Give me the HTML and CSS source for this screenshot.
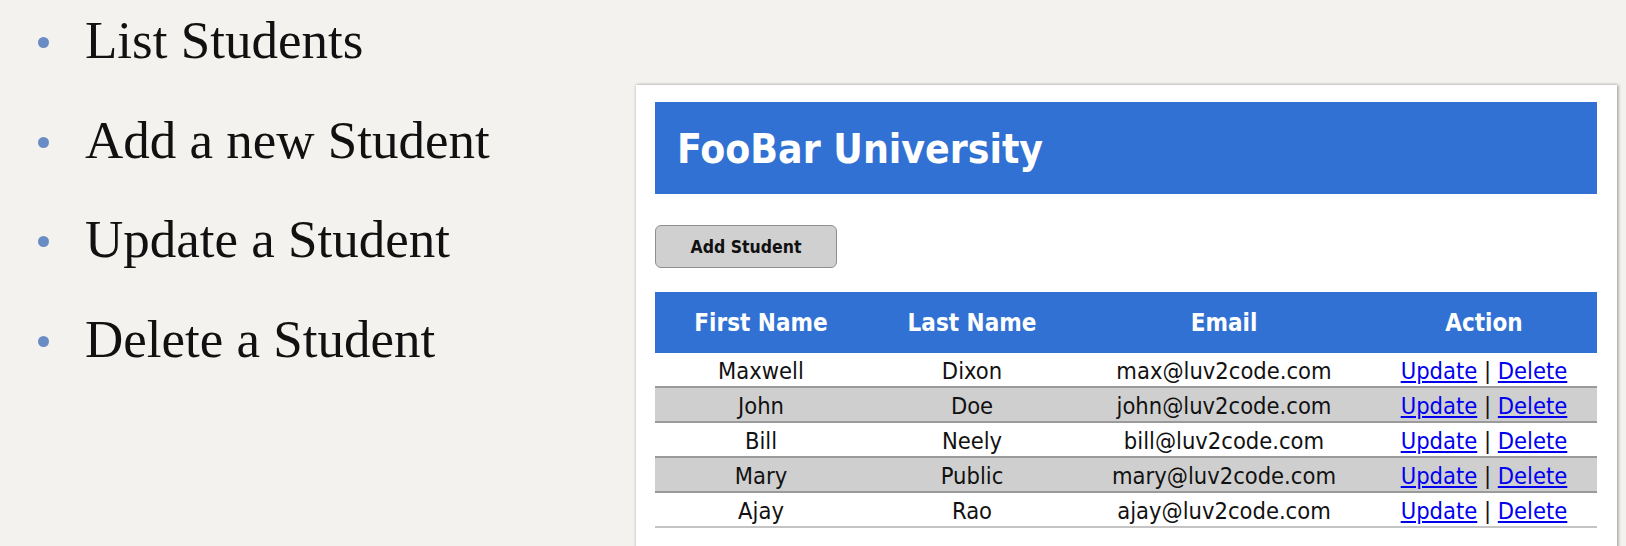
FILE: index.html
```html
<!DOCTYPE html>
<html lang="en">
<head>
<meta charset="utf-8">
<title>Student Tracker</title>
<link rel="stylesheet" href="styles.css">
</head>
<body>
<div class="slide">
  <ul class="points">
    <li>List Students</li>
    <li>Add a new Student</li>
    <li>Update a Student</li>
    <li>Delete a Student</li>
  </ul>
  <div class="panel">
    <div class="banner"><h1>FooBar University</h1></div>
    <button class="add-btn" type="button">Add Student</button>
    <table class="students">
      <colgroup>
        <col class="c-first"><col class="c-last"><col class="c-email"><col class="c-action">
      </colgroup>
      <thead>
        <tr><th>First Name</th><th>Last Name</th><th>Email</th><th>Action</th></tr>
      </thead>
      <tbody>
        <tr><td>Maxwell</td><td>Dixon</td><td>max@luv2code.com</td><td><a href="#">Update</a> | <a href="#">Delete</a></td></tr>
        <tr><td>John</td><td>Doe</td><td>john@luv2code.com</td><td><a href="#">Update</a> | <a href="#">Delete</a></td></tr>
        <tr><td>Bill</td><td>Neely</td><td>bill@luv2code.com</td><td><a href="#">Update</a> | <a href="#">Delete</a></td></tr>
        <tr><td>Mary</td><td>Public</td><td>mary@luv2code.com</td><td><a href="#">Update</a> | <a href="#">Delete</a></td></tr>
        <tr><td>Ajay</td><td>Rao</td><td>ajay@luv2code.com</td><td><a href="#">Update</a> | <a href="#">Delete</a></td></tr>
      </tbody>
    </table>
  </div>
</div>
</body>
</html>
```

FILE: styles.css
```css
html, body {
  margin: 0;
  padding: 0;
}

body {
  width: 1626px;
  height: 546px;
  overflow: hidden;
  background: #f4f2ee;
}

.slide {
  display: flex;
  align-items: flex-start;
  height: 546px;
}

.points {
  flex: 0 0 636px;
  box-sizing: border-box;
  margin: 0;
  padding: 10px 0 0 0;
  list-style: none;
  display: flex;
  flex-direction: column;
  gap: 39.5px;
  font-family: "Liberation Serif", "Times New Roman", serif;
  font-size: 53px;
  line-height: 60px;
  color: #111;
}

.points li {
  white-space: nowrap;
}

.points li::before {
  content: "";
  display: inline-block;
  width: 11px;
  height: 11px;
  border-radius: 50%;
  background: #6a8cc4;
  margin: 0 36px 0 38px;
  vertical-align: 10px;
}

.panel {
  flex: 0 0 977px;
  box-sizing: border-box;
  margin-top: 85px;
  height: 480px;
  padding: 17px 20px 0 19px;
  background: #fff;
  box-shadow: 0 0 3px rgba(0, 0, 0, 0.25), 2px 0 3px rgba(0, 0, 0, 0.2);
}

.banner {
  height: 92px;
  box-sizing: border-box;
  background: #3171d3;
  display: flex;
  align-items: center;
  padding: 2px 0 0 22px;
}

.banner h1 {
  margin: 0;
  font-family: "DejaVu Sans", Verdana, sans-serif;
  font-stretch: semi-condensed;
  font-weight: bold;
  font-size: 40.5px;
  color: #fff;
  white-space: nowrap;
}

.add-btn {
  display: block;
  margin-top: 31px;
  width: 182px;
  height: 43px;
  border: 1px solid #8f8f8f;
  border-radius: 6px;
  background: #d0d0d0;
  font-family: "DejaVu Sans", Verdana, sans-serif;
  font-stretch: semi-condensed;
  font-weight: bold;
  font-size: 17.5px;
  color: #111;
  padding: 0;
}

.students {
  margin-top: 24px;
  width: 942px;
  border-collapse: collapse;
  table-layout: fixed;
  font-family: "DejaVu Sans", Verdana, sans-serif;
  font-stretch: semi-condensed;
  font-size: 23.5px;
  color: #111;
}

.c-first { width: 212px; }
.c-last { width: 210px; }
.c-email { width: 294px; }
.c-action { width: 226px; }

.students th {
  height: 61px;
  padding: 0;
  background: #3171d3;
  color: #fff;
  font-weight: bold;
  font-size: 24px;
  text-align: center;
}

.students td {
  height: 30px;
  padding: 3px 0 0;
  text-align: center;
  border-bottom: 2px solid #9a9a9a;
  white-space: nowrap;
  line-height: 30px;
}

.students tbody tr:nth-child(even) td {
  background: #cfcfcf;
}

.students tbody tr:last-child td {
  border-bottom-color: #c4c4c4;
}

.students a {
  color: #0000ee;
  text-decoration: underline;
}
```
